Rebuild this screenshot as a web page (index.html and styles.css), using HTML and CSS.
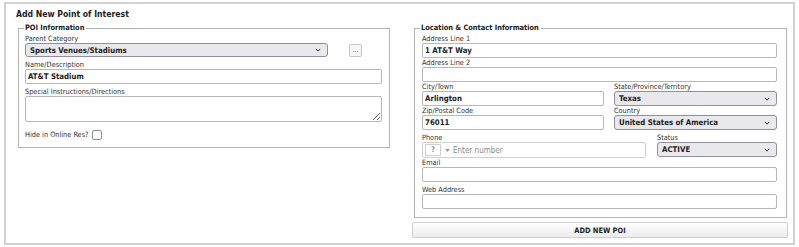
FILE: index.html
```html
<!DOCTYPE html>
<html lang="en">
<head>
<meta charset="utf-8">
<title>Add New Point of Interest</title>
<link rel="stylesheet" href="styles.css">
</head>
<body>
<div class="panel">
  <h1 class="title">Add New Point of Interest</h1>
  <div class="cols">
    <fieldset class="box">
      <legend>POI Information</legend>
      <div class="box-body body-left">
        <label class="lbl lbl-first">Parent Category</label>
        <div class="cat-row">
          <div class="sel-wrap sel-cat">
            <select class="sel"><option>Sports Venues/Stadiums</option></select>
            <svg class="chev" viewBox="0 0 8 5" width="6" height="4"><path d="M1 1 L4 4 L7 1" fill="none" stroke="#333" stroke-width="1.3"/></svg>
          </div>
          <button class="dots" type="button">...</button>
        </div>
        <label class="lbl">Name/Description</label>
        <input class="inp" type="text" value="AT&amp;T Stadium">
        <label class="lbl">Special Instructions/Directions</label>
        <textarea class="ta"></textarea>
        <div class="hide-row">
          <span class="hide-lbl">Hide in Online Res?</span>
          <span class="cb"></span>
        </div>
      </div>
    </fieldset>

    <div class="right">
      <fieldset class="box box-right">
        <legend>Location &amp; Contact Information</legend>
        <div class="box-body body-right">
          <label class="lbl lbl-first">Address Line 1</label>
          <input class="inp" type="text" value="1 AT&amp;T Way">
          <label class="lbl">Address Line 2</label>
          <input class="inp" type="text" value="">
          <div class="row2 row-city">
            <div class="cell">
              <label class="lbl">City/Town</label>
              <input class="inp" type="text" value="Arlington">
            </div>
            <div class="cell">
              <label class="lbl">State/Province/Territory</label>
              <div class="sel-wrap">
                <select class="sel"><option>Texas</option></select>
                <svg class="chev" viewBox="0 0 8 5" width="6" height="4"><path d="M1 1 L4 4 L7 1" fill="none" stroke="#333" stroke-width="1.3"/></svg>
              </div>
            </div>
          </div>
          <div class="row2 row-city">
            <div class="cell">
              <label class="lbl">Zip/Postal Code</label>
              <input class="inp" type="text" value="76011">
            </div>
            <div class="cell">
              <label class="lbl">Country</label>
              <div class="sel-wrap">
                <select class="sel"><option>United States of America</option></select>
                <svg class="chev" viewBox="0 0 8 5" width="6" height="4"><path d="M1 1 L4 4 L7 1" fill="none" stroke="#333" stroke-width="1.3"/></svg>
              </div>
            </div>
          </div>
          <div class="row2 row-phone">
            <div class="cell">
              <label class="lbl lbl-gap">Phone</label>
              <div class="phone">
                <span class="cc">?</span>
                <svg class="tri" viewBox="0 0 6 4" width="5" height="3"><path d="M0 0 L6 0 L3 4 Z" fill="#999"/></svg>
                <input class="ph-inp" type="text" placeholder="Enter number">
              </div>
            </div>
            <div class="cell">
              <label class="lbl lbl-gap">Status</label>
              <div class="sel-wrap">
                <select class="sel"><option>ACTIVE</option></select>
                <svg class="chev" viewBox="0 0 8 5" width="6" height="4"><path d="M1 1 L4 4 L7 1" fill="none" stroke="#333" stroke-width="1.3"/></svg>
              </div>
            </div>
          </div>
          <label class="lbl">Email</label>
          <input class="inp" type="text" value="">
          <label class="lbl lbl-gap">Web Address</label>
          <input class="inp" type="text" value="">
        </div>
      </fieldset>
      <button class="add" type="button">ADD NEW POI</button>
    </div>
  </div>
</div>
</body>
</html>
```
FILE: styles.css
```css
* { box-sizing: border-box; }
html, body { margin: 0; padding: 0; background: #fff; }
body {
  font-family: "DejaVu Sans Condensed", "DejaVu Sans", sans-serif;
  color: #222;
}
.panel {
  margin: 2px 4px 0 4px;
  height: 243px;
  border: 2px solid #d2d2d2;
}
.title {
  margin: 0;
  padding: 4px 0 3px 10px;
  font-size: 8.6px;
  line-height: 12px;
  font-weight: bold;
  color: #222;
}
.cols {
  display: grid;
  grid-template-columns: 372px 376px;
  column-gap: 22px;
  padding-left: 12px;
  align-items: start;
}
.box {
  margin: 0;
  padding: 0;
  border: 1px solid #b3b3b3;
  min-width: 0;
}
.box legend {
  font-size: 7.4px;
  font-weight: bold;
  line-height: 10px;
  padding: 0 2px 0 1px;
  margin-left: 5px;
  color: #222;
}
.box-body { display: flex; flex-direction: column; }
.body-left { padding: 1px 7px 7px 6px; }
.right { display: flex; flex-direction: column; }
.box-right { margin: 0 1px 0 2px; }
.body-right { padding: 1px 9px 8px 7px; }

.lbl {
  display: block;
  font-size: 7.3px;
  line-height: 9px;
  color: #333;
  white-space: nowrap;
}
.body-left .lbl { padding-top: 3px; }
.body-left .lbl-first { padding-top: 0; }
.lbl-gap { padding-top: 3px; }

.inp {
  display: block;
  width: 100%;
  height: 15px;
  margin: 0;
  padding: 0 2px;
  border: 1px solid #b8b8b8;
  border-radius: 2px;
  background: #fff;
  font-family: inherit;
  font-size: 7.8px;
  font-weight: bold;
  color: #222;
  outline: none;
}

.cat-row {
  display: flex;
  align-items: center;
  height: 14px;
  gap: 21px;
}
.sel-wrap {
  position: relative;
  height: 15px;
}
.sel-cat { width: 303px; height: 14px; }
.sel {
  appearance: none;
  -webkit-appearance: none;
  display: block;
  width: 100%;
  height: 100%;
  margin: 0;
  padding: 0 14px 0 4px;
  border: 1px solid #8f8f9d;
  border-radius: 3px;
  background: #e9e9ed;
  font-family: inherit;
  font-size: 7.8px;
  font-weight: bold;
  color: #222;
  outline: none;
}
.chev {
  position: absolute;
  right: 7px;
  top: 50%;
  margin-top: -2px;
}
.dots {
  width: 13px;
  height: 13px;
  margin: 1px 0 0;
  padding: 0;
  border: 1px solid #c8c8c8;
  border-radius: 2px;
  background: #f6f6f6;
  font-family: inherit;
  font-size: 7px;
  line-height: 9px;
  color: #333;
}
.ta {
  display: block;
  width: 100%;
  height: 26px;
  margin: 0;
  border: 1px solid #b8b8b8;
  border-radius: 2px;
  resize: vertical;
  font-family: inherit;
  outline: none;
}
.hide-row {
  display: flex;
  align-items: center;
  gap: 3px;
  margin-top: 7px;
  height: 11px;
}
.hide-lbl { font-size: 7.3px; line-height: 9px; color: #333; }
.cb {
  width: 10px;
  height: 10px;
  border: 1px solid #8f8f9d;
  border-radius: 2px;
  background: #fff;
}

.row2 { display: grid; column-gap: 10px; }
.row-city { grid-template-columns: 182px 1fr; }
.row-phone { grid-template-columns: 224px 1fr; column-gap: 11px; }
.cell { min-width: 0; }

.phone {
  display: flex;
  align-items: center;
  height: 16px;
  border: 1px solid #cfcfcf;
  border-radius: 2px;
  padding-left: 2px;
}
.cc {
  width: 16px;
  height: 12px;
  border: 1px solid #cfcfcf;
  font-size: 7.5px;
  line-height: 10px;
  text-align: center;
  color: #444;
}
.tri { margin: 0 3px 0 4px; }
.ph-inp {
  flex: 1;
  min-width: 0;
  border: 0;
  margin: 0;
  padding: 0;
  height: 12px;
  font-family: inherit;
  font-size: 8px;
  color: #222;
  outline: none;
  background: transparent;
}
.ph-inp::placeholder { color: #8a8a8a; }

.add {
  margin-top: 4px;
  height: 16px;
  width: 100%;
  border: 1px solid #cfcfcf;
  border-radius: 2px;
  background: linear-gradient(#ffffff, #ececec);
  font-family: inherit;
  font-size: 7.4px;
  font-weight: bold;
  color: #222;
  padding: 0;
}
```
